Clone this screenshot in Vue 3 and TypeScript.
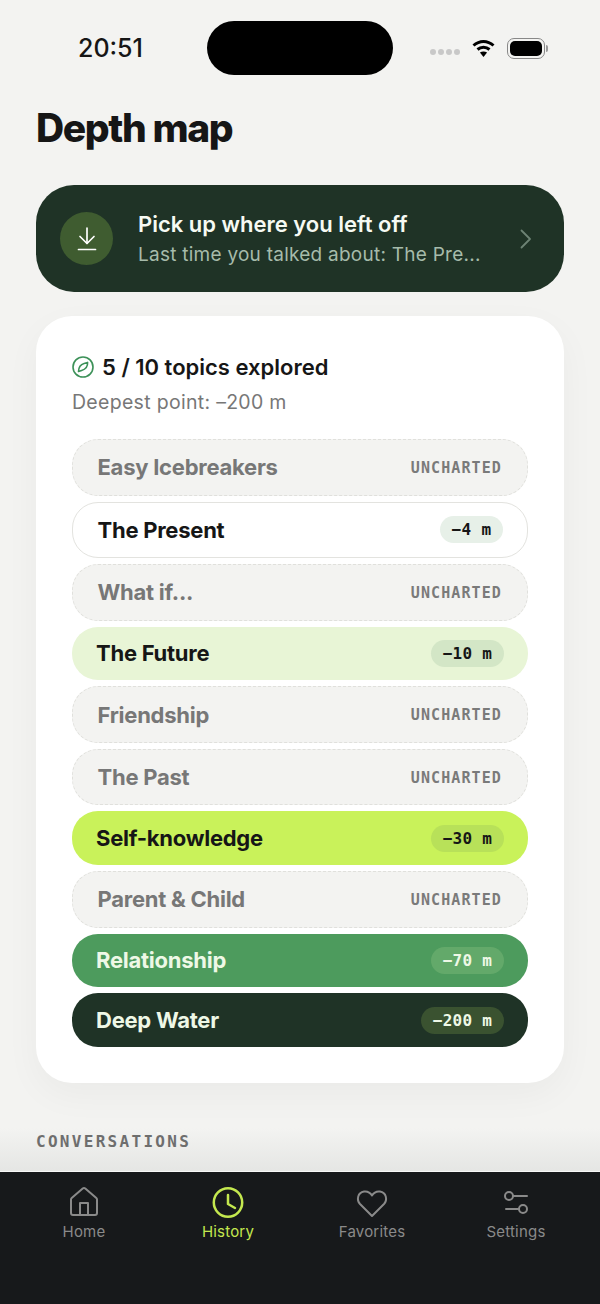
<script setup lang="ts">
interface Topic {
  name: string
  depth?: string
  tone?: string
}

const topics: Topic[] = [
  { name: 'Easy Icebreakers' },
  { name: 'The Present', depth: '−4 m', tone: 'surface' },
  { name: 'What if...' },
  { name: 'The Future', depth: '−10 m', tone: 'pale' },
  { name: 'Friendship' },
  { name: 'The Past' },
  { name: 'Self-knowledge', depth: '−30 m', tone: 'lime' },
  { name: 'Parent & Child' },
  { name: 'Relationship', depth: '−70 m', tone: 'green' },
  { name: 'Deep Water', depth: '−200 m', tone: 'deep' },
]

const tabs = [
  { label: 'Home', icon: 'home' },
  { label: 'History', icon: 'clock', active: true },
  { label: 'Favorites', icon: 'heart' },
  { label: 'Settings', icon: 'sliders' },
]
</script>

<template>
  <div class="screen">
    <div class="status">
      <span class="time">20:51</span>
      <div class="island"></div>
      <div class="status-right">
        <div class="dots"><i></i><i></i><i></i><i></i></div>
        <svg class="wifi" width="25" height="20" viewBox="0 0 24 20" fill="none" stroke="#000" stroke-width="3">
          <path d="M2 7.500C8 2 16 2 22 7.500" />
          <path d="M6 11.500C9.500 8.500 14.500 8.500 18 11.500" />
          <path d="M12 19l-3.600-4.400c2.200-1.400 5-1.400 7.200 0z" fill="#000" stroke="none" />
        </svg>
        <div class="battery"><div class="battery-fill"></div></div>
      </div>
    </div>

    <h1 class="title">Depth map</h1>

    <div class="resume">
      <div class="resume-icon">
        <svg width="24" height="26" viewBox="0 0 24 26" fill="none" stroke="#fff" stroke-width="1.7" stroke-linecap="round" stroke-linejoin="round">
          <path d="M12 2v15" />
          <path d="M5 10.500l7 7 7-7" />
          <path d="M3.500 23.500h17" />
        </svg>
      </div>
      <div class="resume-text">
        <div class="resume-title">Pick up where you left off</div>
        <div class="resume-sub">Last time you talked about: The Pre...</div>
      </div>
      <svg class="chevron" width="12" height="20" viewBox="0 0 12 20" fill="none" stroke="#6d8374" stroke-width="1.8" stroke-linecap="round" stroke-linejoin="round">
        <path d="M1.500 1.500l8.500 8.500-8.500 8.500" />
      </svg>
    </div>

    <div class="card">
      <div class="card-head">
        <svg width="22" height="22" viewBox="0 0 22 22" fill="none" stroke="#3c9158" stroke-width="1.6" stroke-linejoin="round">
          <circle cx="11" cy="11" r="10" />
          <path d="M15.600 6.400c.2 3.600-1.800 6.900-6 8.100l-3.100 1c.1-4 2-7.100 5.600-8.100z" />
        </svg>
        <span>5 / 10 topics explored</span>
      </div>
      <div class="card-sub">Deepest point: –200 m</div>

      <div class="topics">
        <div
          v-for="topic in topics"
          :key="topic.name"
          class="topic"
          :class="topic.tone ?? 'uncharted'"
        >
          <span class="topic-name">{{ topic.name }}</span>
          <span v-if="topic.depth" class="depth">{{ topic.depth }}</span>
          <span v-else class="tag">UNCHARTED</span>
        </div>
      </div>
    </div>

    <div class="section-label">CONVERSATIONS</div>

    <div class="fade"></div>
    <nav class="tabbar">
      <div v-for="tab in tabs" :key="tab.label" class="tab" :class="{ active: tab.active }">
        <svg width="32" height="32" viewBox="0 0 32 32" fill="none" stroke="currentColor" stroke-width="2" stroke-linecap="round" stroke-linejoin="round">
          <template v-if="tab.icon === 'home'">
            <path d="M3 13.500a2 2 0 0 1 .7-1.500L14.700 2.500a2 2 0 0 1 2.600 0L28.300 12a2 2 0 0 1 .7 1.500V27a2 2 0 0 1-2 2H5a2 2 0 0 1-2-2z" />
            <path d="M12 29V17h8v12" />
          </template>
          <template v-else-if="tab.icon === 'clock'">
            <circle cx="16" cy="16.500" r="14.200" stroke-width="2.500" />
            <path d="M16 9v9l7 4" stroke-width="2.500" />
          </template>
          <path
            v-else-if="tab.icon === 'heart'"
            d="M16 30L4 18C.4 14 1.500 6.500 8 5.500c3.500-.5 6.300 1.200 8 4 1.700-2.800 4.500-4.500 8-4C30.500 6.500 31.600 14 28 18z"
          />
          <template v-else>
            <circle cx="9" cy="10" r="4" />
            <path d="M13 10h14" />
            <circle cx="23" cy="23" r="4" />
            <path d="M6 23h13" />
          </template>
        </svg>
        <span>{{ tab.label }}</span>
      </div>
    </nav>
  </div>
</template>

<style>
html,
body {
  margin: 0;
  background: #f3f3f1;
}
</style>

<style scoped>
.screen {
  position: relative;
  width: 600px;
  height: 1304px;
  overflow: hidden;
  box-sizing: border-box;
  padding: 21px 36px 0;
  background: #f3f3f1;
  font-family: Inter, "Liberation Sans", sans-serif;
  color: #161616;
}

.status {
  position: relative;
  height: 54px;
  display: flex;
  justify-content: space-between;
  align-items: center;
}

.time {
  margin-left: 42px;
  font-size: 25px;
  font-weight: 500;
  line-height: 54px;
}

.island {
  position: absolute;
  left: 171px;
  top: 0;
  width: 186px;
  height: 54px;
  border-radius: 27px;
  background: #000;
}

.status-right {
  display: flex;
  align-items: center;
  margin-right: 19px;
}

.dots {
  display: flex;
  gap: 2px;
  margin-top: 7px;
  margin-right: 11px;
}

.dots i {
  display: block;
  width: 6px;
  height: 6px;
  border-radius: 50%;
  background: #c8c8c8;
}

.wifi {
  margin-right: 11px;
  margin-top: -1px;
}

.battery {
  position: relative;
  box-sizing: border-box;
  width: 38px;
  height: 21px;
  padding: 2px;
  border: 1px solid #888;
  border-radius: 7px;
}

.battery::after {
  content: "";
  position: absolute;
  right: -4px;
  top: 6px;
  width: 2px;
  height: 7px;
  border-radius: 0 2px 2px 0;
  background: #999;
}

.battery-fill {
  height: 100%;
  border-radius: 5px;
  background: #000;
}

.title {
  margin: 29px 0 0;
  font-size: 39px;
  line-height: 48px;
  font-weight: 800;
  letter-spacing: -1.400px;
}

.resume {
  margin-top: 33px;
  height: 107px;
  display: flex;
  align-items: center;
  box-sizing: border-box;
  padding: 0 32px 0 24px;
  border-radius: 38px;
  background: #1f3326;
}

.resume-icon {
  flex: none;
  width: 53px;
  height: 53px;
  border-radius: 50%;
  background: #3f5c30;
  display: flex;
  align-items: center;
  justify-content: center;
}

.resume-text {
  flex: 1;
  margin-left: 25px;
}

.resume-title {
  color: #f6faf3;
  font-size: 22px;
  font-weight: 600;
  line-height: 28px;
}

.resume-sub {
  margin-top: 5.500px;
  color: #a6bbab;
  font-size: 19px;
  line-height: 24px;
  letter-spacing: 0.25px;
  white-space: nowrap;
}

.card {
  margin-top: 24px;
  height: 767px;
  box-sizing: border-box;
  padding: 37px 36px 0;
  border-radius: 36px;
  background: #fff;
  box-shadow: 0 12px 36px rgba(0, 0, 0, 0.04);
}

.card-head {
  display: flex;
  align-items: center;
  gap: 8px;
  font-size: 22px;
  font-weight: 600;
  line-height: 28px;
}

.card-sub {
  margin-top: 9px;
  color: #777;
  font-size: 19.500px;
  line-height: 24px;
  letter-spacing: 0.3px;
}

.topics {
  margin-top: 25px;
  display: flex;
  flex-direction: column;
  gap: 6px;
}

.topic {
  box-sizing: border-box;
  height: 53.800px;
  padding: 0 24px;
  display: flex;
  align-items: center;
  justify-content: space-between;
  border-radius: 26px;
  font-size: 22px;
  font-weight: 700;
  letter-spacing: -0.25px;
}

.topic.uncharted,
.topic.surface {
  height: 56.500px;
  padding: 0 24px 0 24.500px;
}

.uncharted {
  background: #f3f3f1;
  border: 1.500px dashed #e0e0dc;
  color: #777;
}

.surface {
  background: #fff;
  border: 1.500px solid #e3e3df;
  color: #161616;
}

.pale {
  background: #e8f5d6;
}

.lime {
  background: #c9f25a;
}

.green {
  background: #4d9b5d;
  color: #eef8e6;
}

.deep {
  background: #1f3326;
  color: #eef8e6;
}

.tag,
.depth,
.section-label {
  font-family: "DejaVu Sans Mono", "Liberation Mono", monospace;
}

.tag {
  margin-top: 1px;
  margin-right: 1px;
  color: #7a7a7a;
  font-size: 15px;
  font-weight: 700;
  letter-spacing: 1.100px;
}

.depth {
  padding: 0 11.700px;
  height: 27px;
  line-height: 27px;
  border-radius: 14px;
  font-size: 16px;
  font-weight: 700;
  letter-spacing: 0.3px;
  white-space: pre;
}

.surface .depth {
  background: #e7f0e8;
}

.pale .depth {
  background: #d3e6c6;
}

.lime .depth {
  background: #b8e159;
}

.green .depth {
  background: #63a96a;
}

.deep .depth {
  background: #3a5230;
}

.section-label {
  position: relative;
  z-index: 1;
  margin-top: 49px;
  color: #6e6e6e;
  font-size: 16px;
  font-weight: 700;
  letter-spacing: 2.300px;
  line-height: 20px;
}

.fade {
  position: absolute;
  left: 0;
  right: 0;
  bottom: 132px;
  height: 44px;
  background: linear-gradient(rgba(228, 229, 227, 0), rgba(228, 229, 227, 0.95));
}

.tabbar {
  position: absolute;
  left: 0;
  right: 0;
  bottom: 0;
  height: 132px;
  box-sizing: border-box;
  padding: 14px 12px 0;
  display: flex;
  align-items: flex-start;
  background: #17191b;
  box-shadow: 0 -1px 0 #f7f7f7;
}

.tab {
  flex: 1;
  display: flex;
  flex-direction: column;
  align-items: center;
  color: #8a8a8a;
  font-size: 15px;
  letter-spacing: 0.2px;
}

.tab svg {
  display: block;
  margin-bottom: 3px;
}

.tab span {
  line-height: 22px;
}

.tab.active {
  color: #c4e84f;
}
</style>
